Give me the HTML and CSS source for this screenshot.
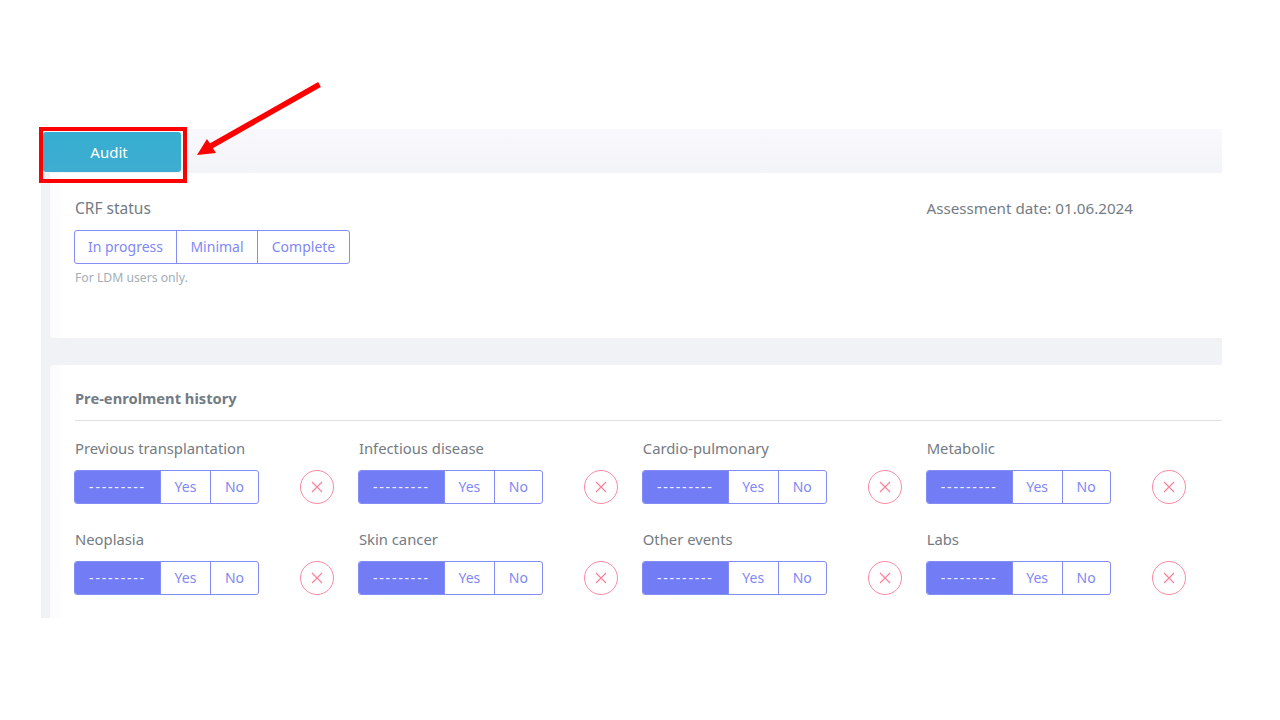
FILE: index.html
```html
<!DOCTYPE html>
<html lang="en">
<head>
    <meta charset="UTF-8">
    <title>Audit</title>
    <link rel="stylesheet" href="styles.css">
</head>
<body>

<div class="page">
    <div class="topbar">
        <button class="audit-btn" type="button">Audit</button>
    </div>

    <div class="content">
        <section class="card card-status">
            <div class="status-left">
                <div class="field-label">CRF status</div>
                <div class="toggle toggle-status">
                    <span>In progress</span>
                    <span>Minimal</span>
                    <span>Complete</span>
                </div>
                <div class="hint">For LDM users only.</div>
            </div>
            <div class="assess-date">Assessment date: 01.06.2024</div>
        </section>

        <section class="card card-history">
            <h3 class="section-title">Pre-enrolment history</h3>
            <div class="history-grid">
                <div class="item">
                    <div class="field-label">Previous transplantation</div>
                    <div class="item-row">
                        <div class="toggle toggle-yn"><span class="active">---------</span><span>Yes</span><span>No</span></div>
                        <span class="clear-btn"><svg viewBox="0 0 12 12"><path d="M1 1 L11 11 M11 1 L1 11"/></svg></span>
                    </div>
                </div>
                <div class="item">
                    <div class="field-label">Infectious disease</div>
                    <div class="item-row">
                        <div class="toggle toggle-yn"><span class="active">---------</span><span>Yes</span><span>No</span></div>
                        <span class="clear-btn"><svg viewBox="0 0 12 12"><path d="M1 1 L11 11 M11 1 L1 11"/></svg></span>
                    </div>
                </div>
                <div class="item">
                    <div class="field-label">Cardio-pulmonary</div>
                    <div class="item-row">
                        <div class="toggle toggle-yn"><span class="active">---------</span><span>Yes</span><span>No</span></div>
                        <span class="clear-btn"><svg viewBox="0 0 12 12"><path d="M1 1 L11 11 M11 1 L1 11"/></svg></span>
                    </div>
                </div>
                <div class="item">
                    <div class="field-label">Metabolic</div>
                    <div class="item-row">
                        <div class="toggle toggle-yn"><span class="active">---------</span><span>Yes</span><span>No</span></div>
                        <span class="clear-btn"><svg viewBox="0 0 12 12"><path d="M1 1 L11 11 M11 1 L1 11"/></svg></span>
                    </div>
                </div>
                <div class="item">
                    <div class="field-label">Neoplasia</div>
                    <div class="item-row">
                        <div class="toggle toggle-yn"><span class="active">---------</span><span>Yes</span><span>No</span></div>
                        <span class="clear-btn"><svg viewBox="0 0 12 12"><path d="M1 1 L11 11 M11 1 L1 11"/></svg></span>
                    </div>
                </div>
                <div class="item">
                    <div class="field-label">Skin cancer</div>
                    <div class="item-row">
                        <div class="toggle toggle-yn"><span class="active">---------</span><span>Yes</span><span>No</span></div>
                        <span class="clear-btn"><svg viewBox="0 0 12 12"><path d="M1 1 L11 11 M11 1 L1 11"/></svg></span>
                    </div>
                </div>
                <div class="item">
                    <div class="field-label">Other events</div>
                    <div class="item-row">
                        <div class="toggle toggle-yn"><span class="active">---------</span><span>Yes</span><span>No</span></div>
                        <span class="clear-btn"><svg viewBox="0 0 12 12"><path d="M1 1 L11 11 M11 1 L1 11"/></svg></span>
                    </div>
                </div>
                <div class="item">
                    <div class="field-label">Labs</div>
                    <div class="item-row">
                        <div class="toggle toggle-yn"><span class="active">---------</span><span>Yes</span><span>No</span></div>
                        <span class="clear-btn"><svg viewBox="0 0 12 12"><path d="M1 1 L11 11 M11 1 L1 11"/></svg></span>
                    </div>
                </div>
            </div>
        </section>
    </div>
</div>

<!-- annotation drawn over the screenshot -->
<div class="callout-box"></div>
<svg class="callout-arrow" width="140" height="90" viewBox="0 0 140 90">
    <path d="M124.5 4.5 L16 66" stroke="#ff0000" stroke-width="5.5" fill="none"/>
    <path d="M2 75 L12 59 L21 73 Z" fill="#ff0000"/>
</svg>

</body>
</html>
```

FILE: styles.css
```css
body {
    margin: 0;
    background-color: #fff;
    font-family: "Noto Sans", "Open Sans", sans-serif;
    color: #737b84;
}
.page {
    width: 1181px;
    height: 489px;
    margin: 129px 0 0 41px;
    background-color: #f1f2f6;
    overflow: hidden;
}
.topbar {
    height: 44px;
    box-sizing: border-box;
    padding: 3px 0 0 2px;
    background: linear-gradient(#f9f9fd, #f3f4f8);
}
.audit-btn {
    display: block;
    width: 138px;
    height: 40px;
    padding: 0 6px 1px 0;
    border: none;
    border-radius: 3px;
    background: linear-gradient(#36aed0, #3eadd0);
    color: #fff;
    font-family: inherit;
    font-size: 15px;
}
.content {
    padding-left: 9px;
}
.card {
    background: linear-gradient(90deg, #fbfbfd, #fff 16px);
    box-sizing: border-box;
    padding-left: 25px;
}
.card-status {
    display: flex;
    justify-content: space-between;
    height: 165px;
    margin-bottom: 27px;
    border-radius: 0 0 0 4px;
    padding-top: 25px;
}
.assess-date {
    margin-right: 89px;
    font-size: 15.2px;
    line-height: 20px;
}
.field-label {
    font-size: 14.8px;
    line-height: 20px;
}
.status-left .field-label {
    margin-bottom: 12px;
    font-size: 15.5px;
}
.toggle {
    display: grid;
    height: 34px;
    margin-left: -1px;
    box-sizing: border-box;
    border: 1px solid #848cf6;
    border-radius: 3px;
    overflow: hidden;
    color: #7f88f5;
    font-size: 14px;
}
.toggle span {
    display: flex;
    align-items: center;
    justify-content: center;
    padding-bottom: 2px;
    border-left: 1px solid #848cf6;
}
.toggle span:first-child {
    border-left: none;
}
.toggle .active {
    background-color: #727cf5;
    color: #eef0ff;
    letter-spacing: 1.8px;
}
.toggle-status {
    width: 276px;
    grid-template-columns: 101px 81px 92px;
}
.toggle-yn {
    width: 185px;
    grid-template-columns: 85px 50px 48px;
}
.hint {
    margin-top: 6px;
    font-size: 12.2px;
    line-height: 16px;
    color: #a2aeb5;
}
.card-history {
    height: 260px;
    border-radius: 4px 0 0 0;
    padding-top: 23px;
}
.section-title {
    margin: 0;
    height: 32px;
    border-bottom: 1px solid #dee2e6;
    font-size: 14.7px;
    line-height: 20px;
    font-weight: 700;
}
.history-grid {
    display: grid;
    grid-template-columns: repeat(4, 283.9px);
    row-gap: 25px;
    padding-top: 17px;
}
.item-row {
    display: flex;
    align-items: center;
    gap: 41px;
    margin-top: 12px;
}
.clear-btn {
    display: flex;
    align-items: center;
    justify-content: center;
    width: 34px;
    height: 34px;
    box-sizing: border-box;
    border: 1px solid #fb8aa2;
    border-radius: 50%;
}
.clear-btn svg {
    width: 12px;
    height: 12px;
    fill: none;
    stroke: #fb7d96;
    stroke-width: 1.1;
}
.callout-box {
    position: absolute;
    left: 39px;
    top: 127px;
    width: 148px;
    height: 56px;
    box-sizing: border-box;
    border: 4px solid #ff0000;
}
.callout-arrow {
    position: absolute;
    left: 195px;
    top: 80px;
}
```
